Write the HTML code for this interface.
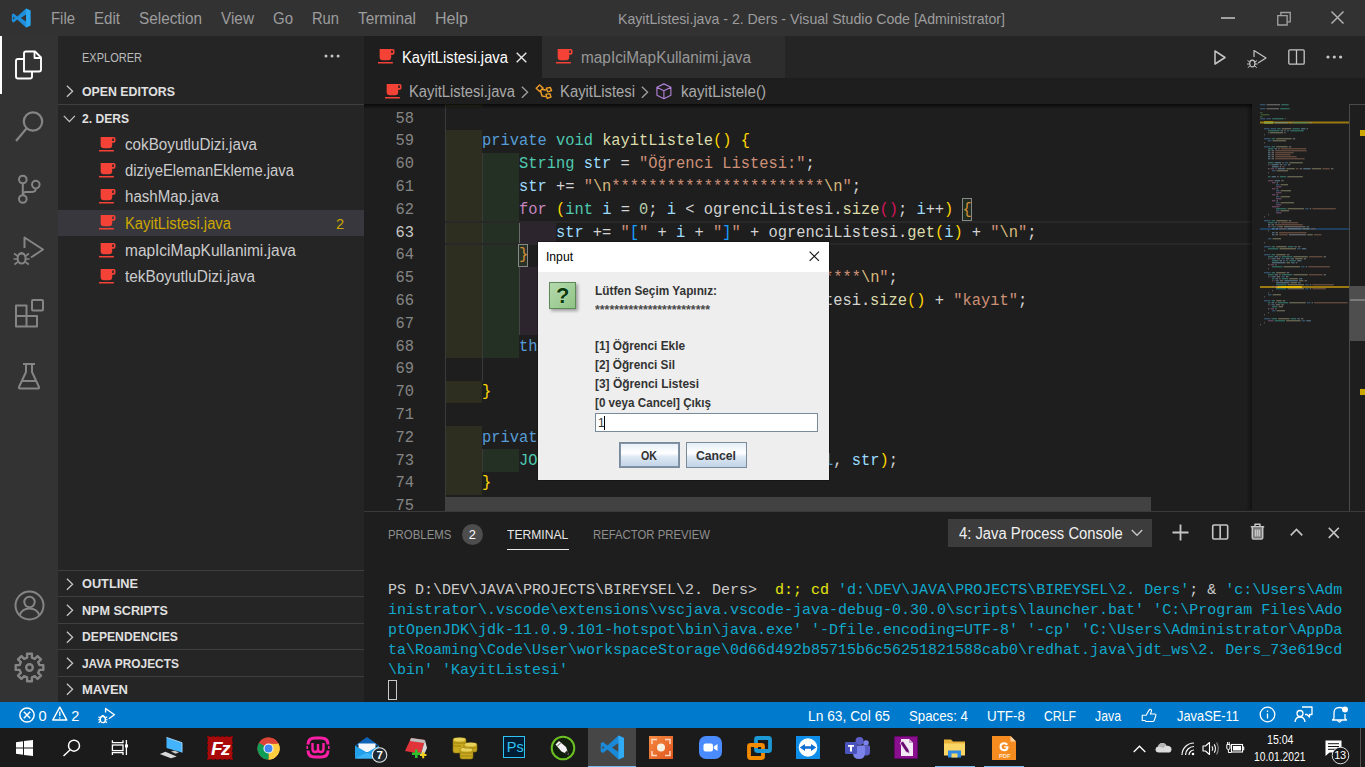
<!DOCTYPE html>
<html lang="tr"><head><meta charset="utf-8"><title>KayitListesi.java - 2. Ders - Visual Studio Code</title>
<style>
*{box-sizing:border-box;margin:0;padding:0}
html,body{width:1365px;height:767px;overflow:hidden;background:#1e1e1e}
body{position:relative;font-family:"Liberation Sans",sans-serif;font-size:14.5px;color:#ccc}
.t{position:absolute;white-space:pre;display:block;transform-origin:0 50%}
.a{position:absolute}
svg{position:absolute;overflow:visible}
.code{position:absolute;left:445px;white-space:pre;font-family:"Liberation Mono",monospace;font-size:16px;line-height:23px;height:23px;color:#d4d4d4;transform:scaleX(0.9625);transform-origin:0 50%}
.ln{position:absolute;left:364px;width:50px;text-align:right;font-family:"Liberation Mono",monospace;font-size:16px;line-height:23px;height:23px;color:#858585;transform:scaleX(0.9625);transform-origin:100% 50%}
.term{position:absolute;left:388px;white-space:pre;font-family:"Liberation Mono",monospace;font-size:15px;line-height:20px;height:20px;color:#11a8cd}
.kw{color:#569cd6}.ty{color:#4ec9b0}.fn{color:#dcdcaa}.va{color:#9cdcfe}.st{color:#ce9178}.es{color:#d7ba7d}.ct{color:#c586c0}.nu{color:#b5cea8}
.b1{color:#ffd700}.b2{color:#d4145a}.b3{color:#179fff}
.bo{color:#d39034}
.tw{color:#cccccc}.tyl{color:#e5e510}

</style></head>
<body>
<div class="a" style="left:0;top:0;width:1365px;height:36px;background:#323233"></div>
<svg style="left:11px;top:8px" width="20.5" height="20" viewBox="0 0 100 100"><path d="M74 2 L96 12 V88 L74 98 L30 58 L12 72 L3 67 V33 L12 28 L30 42 Z M74 32 L48 50 L74 68 Z M10 43 V57 L18 50 Z" fill="#1f8fdc" fill-rule="evenodd"/><path d="M74 2 L96 12 V88 L74 98 Z" fill="#2ba6f0"/></svg>
<span class="t" style="left:51px;top:8px;font-size:15.6px;line-height:22px;color:#9d9d9d;transform:scaleX(0.9547);">File</span>
<span class="t" style="left:94px;top:8px;font-size:15.6px;line-height:22px;color:#9d9d9d;transform:scaleX(0.9672);">Edit</span>
<span class="t" style="left:139px;top:8px;font-size:15.6px;line-height:22px;color:#9d9d9d;transform:scaleX(0.9817);">Selection</span>
<span class="t" style="left:221px;top:8px;font-size:15.6px;line-height:22px;color:#9d9d9d;transform:scaleX(0.9841);">View</span>
<span class="t" style="left:273px;top:8px;font-size:15.6px;line-height:22px;color:#9d9d9d;transform:scaleX(0.9611);">Go</span>
<span class="t" style="left:312px;top:8px;font-size:15.6px;line-height:22px;color:#9d9d9d;transform:scaleX(0.9434);">Run</span>
<span class="t" style="left:358px;top:8px;font-size:15.6px;line-height:22px;color:#9d9d9d;transform:scaleX(0.9838);">Terminal</span>
<span class="t" style="left:435px;top:8px;font-size:15.6px;line-height:22px;color:#9d9d9d;transform:scaleX(1.0285);">Help</span>
<span class="t" style="left:618px;top:8.5px;font-size:14.5px;line-height:20px;color:#9d9d9d;transform:scaleX(0.9747);">KayitListesi.java - 2. Ders - Visual Studio Code [Administrator]</span>
<div class="a" style="left:1221px;top:17px;width:14px;height:1.5px;background:#a0a0a0"></div>
<svg style="left:1276.5px;top:11.5px" width="14" height="13.5" viewBox="0 0 13 13" fill="none" stroke="#a0a0a0" stroke-width="1.3"><path d="M0.5 3.5h9v9h-9z M3.5 3.5v-3h9v9h-3"/></svg>
<svg style="left:1331.3px;top:11px" width="13" height="13" viewBox="0 0 13 13" fill="none" stroke="#b0b0b0" stroke-width="1.5"><path d="M0.5 0.5l12 12M12.5 0.5l-12 12"/></svg>
<div class="a" style="left:0;top:36px;width:58px;height:666px;background:#333333"></div>
<div class="a" style="left:0;top:36px;width:2px;height:58px;background:#fff"></div>
<svg style="left:14.4px;top:49.6px" width="29" height="30" viewBox="0 0 29 30" fill="none" stroke="#fff" stroke-width="1.9" stroke-linejoin="round"><path d="M10 21.5 V3.5 Q10 1.5 12 1.5 H21 L27 7.5 V19.5 Q27 21.5 25 21.5 Z"/><path d="M20.5 1.5 V8 H27" stroke-width="1.8"/><path d="M10 9 H4 Q2 9 2 11 V26.5 Q2 28.5 4 28.5 H16 Q18 28.5 18 26.5 V21.5"/></svg>
<svg style="left:14px;top:108px" width="32" height="36" viewBox="0 0 32 36" fill="none" stroke="#858585" stroke-width="2.2"><circle cx="19" cy="13.5" r="9.2"/><path d="M12.5 20.5 L2 33"/></svg>
<svg style="left:16px;top:172px" width="28" height="34" viewBox="0 0 28 34" fill="none" stroke="#858585" stroke-width="2"><circle cx="6.8" cy="7.5" r="3.8"/><circle cx="19.8" cy="12.6" r="3.8"/><circle cx="6.8" cy="27" r="3.8"/><path d="M6.8 11.3 V23.2 M19.8 16.4 Q19.8 20 15 20 H10 Q6.8 20 6.8 23"/></svg>
<svg style="left:12px;top:234px" width="34" height="34" viewBox="0 0 34 34" fill="none" stroke="#858585" stroke-width="2" stroke-linejoin="round"><path d="M12.5 14 V3.5 L31 15.5 L19 23.5"/><ellipse cx="9.6" cy="24.5" rx="4" ry="5"/><path d="M5.6 22 L2 19.5 M5.6 25 H1.5 M5.8 28 L2.5 30.5 M13.6 22 L17 19.5 M13.6 25 H17.6 M13.4 28 L16.8 30.5 M6.5 20.5 Q9.6 17 12.7 20.5" stroke-width="1.6"/></svg>
<svg style="left:14px;top:298px" width="32" height="32" viewBox="0 0 32 32" fill="none" stroke="#858585" stroke-width="2" stroke-linejoin="round"><path d="M2 7.5 H12.5 V18 H23 V28.5 H2 Z M2 18 H12.5 V28.5"/><rect x="18" y="2" width="11" height="10.5" rx="1"/></svg>
<svg style="left:17px;top:362px" width="24" height="28" viewBox="0 0 24 28" fill="none" stroke="#858585" stroke-width="2" stroke-linejoin="round"><path d="M6 2 H18 M9 2 V10 L2 25 Q1.6 26.5 3 26.5 H21 Q22.4 26.5 22 25 L15 10 V2 M5.5 19 H18.5"/></svg>
<svg style="left:13.5px;top:589.8px" width="31" height="31" viewBox="0 0 31 31" fill="none" stroke="#858585" stroke-width="2"><circle cx="15.5" cy="15.5" r="14"/><circle cx="15.5" cy="12" r="5.2"/><path d="M5.5 25.5 Q8 18.5 15.5 18.5 Q23 18.5 25.5 25.5"/></svg>
<svg style="left:13.5px;top:652px" width="31" height="31" viewBox="0 0 31 31" fill="none" stroke="#858585" stroke-width="2.4" stroke-linejoin="round"><path d="M29.29 13.09 L29.29 17.91 L25.42 17.88 L24.20 20.83 L26.95 23.55 L23.55 26.95 L20.83 24.20 L17.88 25.42 L17.91 29.29 L13.09 29.29 L13.12 25.42 L10.17 24.20 L7.45 26.95 L4.05 23.55 L6.80 20.83 L5.58 17.88 L1.71 17.91 L1.71 13.09 L5.58 13.12 L6.80 10.17 L4.05 7.45 L7.45 4.05 L10.17 6.80 L13.12 5.58 L13.09 1.71 L17.91 1.71 L17.88 5.58 L20.83 6.80 L23.55 4.05 L26.95 7.45 L24.20 10.17 L25.42 13.12 Z"/><circle cx="15.5" cy="15.5" r="3.3"/></svg>
<div class="a" style="left:58px;top:36px;width:306px;height:666px;background:#252526"></div>
<span class="t" style="left:82px;top:48.2px;font-size:13.3px;line-height:19px;color:#bbbbbb;transform:scaleX(0.8283);">EXPLORER</span>
<svg style="left:324.4px;top:54.4px" width="18" height="4" fill="#c5c5c5"><circle cx="2" cy="2" r="1.5"/><circle cx="8" cy="2" r="1.5"/><circle cx="14.1" cy="2" r="1.5"/></svg>
<svg style="left:66px;top:85.2px" width="8" height="12.6" viewBox="0 0 8 12.6" fill="none" stroke="#c5c5c5" stroke-width="1.3"><path d="M0.9 0.8 L6.6 6.3 L0.9 11.8"/></svg>
<span class="t" style="left:82px;top:81.5px;font-size:13.7px;line-height:19px;color:#e0e0e0;transform:scaleX(0.9005);font-weight:700;">OPEN EDITORS</span>
<div class="a" style="left:58px;top:104px;width:306px;height:1px;background:#3f3f40"></div>
<svg style="left:63.2px;top:115.2px" width="12.8" height="8" viewBox="0 0 12.8 8" fill="none" stroke="#c5c5c5" stroke-width="1.3"><path d="M0.8 0.9 L6.4 6.6 L11.9 0.9"/></svg>
<span class="t" style="left:82px;top:108.5px;font-size:13.7px;line-height:19px;color:#e0e0e0;transform:scaleX(0.8819);font-weight:700;">2. DERS</span>
<svg style="left:99.4px;top:136.5px" width="16.5" height="14.6" viewBox="2 3 20 18" preserveAspectRatio="none"><path d="M2,21H20V19H2M20,8H18V5H20M20,3H4V13A4,4 0 0,0 8,17H14A4,4 0 0,0 18,13V10H20A2,2 0 0,0 22,8V5C22,3.89 21.1,3 20,3Z" fill="#f44336"/></svg>
<span class="t" style="left:125px;top:133.6px;font-size:15.8px;line-height:22px;color:#cccccc;transform:scaleX(0.9635);">cokBoyutluDizi.java</span>
<svg style="left:99.4px;top:162.6px" width="16.5" height="14.6" viewBox="2 3 20 18" preserveAspectRatio="none"><path d="M2,21H20V19H2M20,8H18V5H20M20,3H4V13A4,4 0 0,0 8,17H14A4,4 0 0,0 18,13V10H20A2,2 0 0,0 22,8V5C22,3.89 21.1,3 20,3Z" fill="#f44336"/></svg>
<span class="t" style="left:125px;top:159.7px;font-size:15.8px;line-height:22px;color:#cccccc;transform:scaleX(0.9387);">diziyeElemanEkleme.java</span>
<svg style="left:99.4px;top:189.3px" width="16.5" height="14.6" viewBox="2 3 20 18" preserveAspectRatio="none"><path d="M2,21H20V19H2M20,8H18V5H20M20,3H4V13A4,4 0 0,0 8,17H14A4,4 0 0,0 18,13V10H20A2,2 0 0,0 22,8V5C22,3.89 21.1,3 20,3Z" fill="#f44336"/></svg>
<span class="t" style="left:125px;top:186.4px;font-size:15.8px;line-height:22px;color:#cccccc;transform:scaleX(0.9555);">hashMap.java</span>
<div class="a" style="left:58px;top:210px;width:306px;height:26px;background:#37373d"></div>
<span class="t" style="left:336px;top:213.5px;font-size:14.6px;line-height:20px;color:#cca700;">2</span>
<svg style="left:99.4px;top:215.4px" width="16.5" height="14.6" viewBox="2 3 20 18" preserveAspectRatio="none"><path d="M2,21H20V19H2M20,8H18V5H20M20,3H4V13A4,4 0 0,0 8,17H14A4,4 0 0,0 18,13V10H20A2,2 0 0,0 22,8V5C22,3.89 21.1,3 20,3Z" fill="#f44336"/></svg>
<span class="t" style="left:125px;top:212.5px;font-size:15.8px;line-height:22px;color:#cca700;transform:scaleX(0.9357);">KayitListesi.java</span>
<svg style="left:99.4px;top:242.5px" width="16.5" height="14.6" viewBox="2 3 20 18" preserveAspectRatio="none"><path d="M2,21H20V19H2M20,8H18V5H20M20,3H4V13A4,4 0 0,0 8,17H14A4,4 0 0,0 18,13V10H20A2,2 0 0,0 22,8V5C22,3.89 21.1,3 20,3Z" fill="#f44336"/></svg>
<span class="t" style="left:125px;top:239.6px;font-size:15.8px;line-height:22px;color:#cccccc;transform:scaleX(0.9785);">mapIciMapKullanimi.java</span>
<svg style="left:99.4px;top:268.9px" width="16.5" height="14.6" viewBox="2 3 20 18" preserveAspectRatio="none"><path d="M2,21H20V19H2M20,8H18V5H20M20,3H4V13A4,4 0 0,0 8,17H14A4,4 0 0,0 18,13V10H20A2,2 0 0,0 22,8V5C22,3.89 21.1,3 20,3Z" fill="#f44336"/></svg>
<span class="t" style="left:125px;top:266px;font-size:15.8px;line-height:22px;color:#cccccc;transform:scaleX(0.9739);">tekBoyutluDizi.java</span>
<div class="a" style="left:58px;top:570px;width:306px;height:1px;background:#3f3f40"></div>
<svg style="left:66px;top:577.7px" width="8" height="12.6" viewBox="0 0 8 12.6" fill="none" stroke="#c5c5c5" stroke-width="1.3"><path d="M0.9 0.8 L6.6 6.3 L0.9 11.8"/></svg>
<span class="t" style="left:82px;top:574.3px;font-size:13.7px;line-height:19px;color:#e0e0e0;transform:scaleX(0.9314);font-weight:700;">OUTLINE</span>
<div class="a" style="left:58px;top:596px;width:306px;height:1px;background:#3f3f40"></div>
<svg style="left:66px;top:604.1px" width="8" height="12.6" viewBox="0 0 8 12.6" fill="none" stroke="#c5c5c5" stroke-width="1.3"><path d="M0.9 0.8 L6.6 6.3 L0.9 11.8"/></svg>
<span class="t" style="left:82px;top:600.7px;font-size:13.7px;line-height:19px;color:#e0e0e0;transform:scaleX(0.9185);font-weight:700;">NPM SCRIPTS</span>
<div class="a" style="left:58px;top:623px;width:306px;height:1px;background:#3f3f40"></div>
<svg style="left:66px;top:630.5px" width="8" height="12.6" viewBox="0 0 8 12.6" fill="none" stroke="#c5c5c5" stroke-width="1.3"><path d="M0.9 0.8 L6.6 6.3 L0.9 11.8"/></svg>
<span class="t" style="left:82px;top:627.1px;font-size:13.7px;line-height:19px;color:#e0e0e0;transform:scaleX(0.8880);font-weight:700;">DEPENDENCIES</span>
<div class="a" style="left:58px;top:649px;width:306px;height:1px;background:#3f3f40"></div>
<svg style="left:66px;top:656.9px" width="8" height="12.6" viewBox="0 0 8 12.6" fill="none" stroke="#c5c5c5" stroke-width="1.3"><path d="M0.9 0.8 L6.6 6.3 L0.9 11.8"/></svg>
<span class="t" style="left:82px;top:653.5px;font-size:13.7px;line-height:19px;color:#e0e0e0;transform:scaleX(0.8687);font-weight:700;">JAVA PROJECTS</span>
<div class="a" style="left:58px;top:676px;width:306px;height:1px;background:#3f3f40"></div>
<svg style="left:66px;top:683.3px" width="8" height="12.6" viewBox="0 0 8 12.6" fill="none" stroke="#c5c5c5" stroke-width="1.3"><path d="M0.9 0.8 L6.6 6.3 L0.9 11.8"/></svg>
<span class="t" style="left:82px;top:679.9px;font-size:13.7px;line-height:19px;color:#e0e0e0;transform:scaleX(0.9492);font-weight:700;">MAVEN</span>
<div class="a" style="left:364px;top:36px;width:1001px;height:42px;background:#252526"></div>
<div class="a" style="left:364px;top:36px;width:178px;height:42px;background:#1e1e1e"></div>
<div class="a" style="left:542px;top:36px;width:243px;height:42px;background:#2d2d2d"></div>
<svg style="left:377.8px;top:49.1px" width="16.5" height="14.6" viewBox="2 3 20 18" preserveAspectRatio="none"><path d="M2,21H20V19H2M20,8H18V5H20M20,3H4V13A4,4 0 0,0 8,17H14A4,4 0 0,0 18,13V10H20A2,2 0 0,0 22,8V5C22,3.89 21.1,3 20,3Z" fill="#f44336"/></svg>
<span class="t" style="left:402px;top:46.5px;font-size:15.8px;line-height:22px;color:#ffffff;transform:scaleX(0.9357);">KayitListesi.java</span>
<svg style="left:516px;top:52px" width="11" height="11" viewBox="0 0 11 11" fill="none" stroke="#e8e8e8" stroke-width="1.4"><path d="M0.7 0.7 L10.3 10.3 M10.3 0.7 L0.7 10.3"/></svg>
<svg style="left:555.8px;top:49.1px" width="16.5" height="14.6" viewBox="2 3 20 18" preserveAspectRatio="none"><path d="M2,21H20V19H2M20,8H18V5H20M20,3H4V13A4,4 0 0,0 8,17H14A4,4 0 0,0 18,13V10H20A2,2 0 0,0 22,8V5C22,3.89 21.1,3 20,3Z" fill="#f44336"/></svg>
<span class="t" style="left:581px;top:46.5px;font-size:15.8px;line-height:22px;color:#989898;transform:scaleX(0.9728);">mapIciMapKullanimi.java</span>
<svg style="left:1213.8px;top:50.4px" width="12" height="15" viewBox="0 0 12 15" fill="none" stroke="#c5c5c5" stroke-width="1.5" stroke-linejoin="round"><path d="M1 1 L11 7.5 L1 14 Z"/></svg>
<svg style="left:1246px;top:49px" width="22" height="20" viewBox="0 0 22 20" fill="none" stroke="#c5c5c5" stroke-width="1.2" stroke-linejoin="round"><path d="M8 8 V1.5 L20 9 L12 14"/><ellipse cx="6.3" cy="14.5" rx="2.6" ry="3.3"/><path d="M3.7 13 L1.5 11.5 M3.7 15 H1 M3.9 17 L1.8 18.6 M8.9 13 L11.1 11.5 M8.9 15 H11.6 M8.7 17 L10.8 18.6" stroke-width="1"/></svg>
<svg style="left:1288px;top:49px" width="17" height="16" viewBox="0 0 17 16" fill="none" stroke="#c5c5c5" stroke-width="1.3"><rect x="0.8" y="0.8" width="15.4" height="14.4" rx="1.2"/><path d="M8.5 1 V15"/></svg>
<svg style="left:1326px;top:55.4px" width="18" height="4" fill="#c5c5c5"><circle cx="2" cy="2" r="1.6"/><circle cx="8.3" cy="2" r="1.6"/><circle cx="14.6" cy="2" r="1.6"/></svg>
<div class="a" style="left:364px;top:78px;width:1001px;height:26px;background:#1e1e1e"></div>
<svg style="left:384.5px;top:83.5px" width="16.5" height="14.6" viewBox="2 3 20 18" preserveAspectRatio="none"><path d="M2,21H20V19H2M20,8H18V5H20M20,3H4V13A4,4 0 0,0 8,17H14A4,4 0 0,0 18,13V10H20A2,2 0 0,0 22,8V5C22,3.89 21.1,3 20,3Z" fill="#f44336"/></svg>
<span class="t" style="left:409px;top:80.5px;font-size:15.8px;line-height:22px;color:#a9a9a9;transform:scaleX(0.9357);">KayitListesi.java</span>
<svg style="left:520.8px;top:85.7px" width="8" height="12.6" viewBox="0 0 8 12.6" fill="none" stroke="#a0a0a0" stroke-width="1.3"><path d="M0.9 0.8 L6.6 6.3 L0.9 11.8"/></svg>
<svg style="left:535px;top:84px" width="18" height="16" viewBox="0 0 18 16" fill="none" stroke="#ee9d28" stroke-width="1.4" stroke-linejoin="round"><path d="M1.2 4.2 L4.6 0.9 L8 4 L4.7 7.4 Z M7.2 5.2 L11 6.2 M5.6 7 L7 12 L10.8 12.6 M11.4 4.2 L15.2 3.4 L16.6 6.6 L12.6 7.8 Z M11 10.4 L14.8 9.6 L16 13 L12.2 14.4 Z"/></svg>
<span class="t" style="left:560px;top:80.5px;font-size:15.8px;line-height:22px;color:#a9a9a9;transform:scaleX(0.9385);">KayitListesi</span>
<svg style="left:641.4px;top:85.7px" width="8" height="12.6" viewBox="0 0 8 12.6" fill="none" stroke="#a0a0a0" stroke-width="1.3"><path d="M0.9 0.8 L6.6 6.3 L0.9 11.8"/></svg>
<svg style="left:656.4px;top:83px" width="15.8" height="16.6" viewBox="0 0 18 19" fill="none" stroke="#b180d7" stroke-width="1.3" stroke-linejoin="round"><path d="M9 1 L17 5 V14 L9 18 L1 14 V5 Z M1 5 L9 9 L17 5 M9 9 V18"/></svg>
<span class="t" style="left:681px;top:80.5px;font-size:15.8px;line-height:22px;color:#a9a9a9;transform:scaleX(0.9584);">kayitListele()</span>
<div class="a" style="left:0;top:702px;width:1365px;height:26px;background:#007acc"></div>
<svg style="left:18.6px;top:706.6px" width="16" height="16" viewBox="0 0 16 16" fill="none" stroke="#fff" stroke-width="1.5"><circle cx="8" cy="8" r="7.1"/><path d="M4.8 4.8 L11.2 11.2 M11.2 4.8 L4.8 11.2"/></svg>
<span class="t" style="left:38.5px;top:705.6px;font-size:14.6px;line-height:20px;color:#ffffff;">0</span>
<svg style="left:51.6px;top:706.4px" width="15.6" height="15" viewBox="0 0 15.6 15" fill="none" stroke="#fff" stroke-width="1.5" stroke-linejoin="round"><path d="M7.8 1.2 L14.8 14 H0.8 Z"/><path d="M7.8 5.6 V10 M7.8 11.2 V12.6" stroke-width="1.3"/></svg>
<span class="t" style="left:71.3px;top:705.6px;font-size:14.6px;line-height:20px;color:#ffffff;">2</span>
<svg style="left:98px;top:707px" width="17" height="17" viewBox="0 0 17 17" fill="none" stroke="#fff" stroke-width="1.4" stroke-linejoin="round"><path d="M7.6 5.6 V1.5 L16.4 7.8 L10.8 11.8"/><ellipse cx="4.8" cy="12.4" rx="2.6" ry="3.2"/><path d="M2.2 11 L0.4 9.8 M2.2 12.7 H0.1 M2.4 14.3 L0.6 15.7 M7.4 11 L9.2 9.8 M7.4 12.7 H9.5 M7.2 14.3 L9 15.7 M3.3 9.7 Q4.8 7.6 6.3 9.7" stroke-width="1.1"/></svg>
<span class="t" style="left:808px;top:705.6px;font-size:14.6px;line-height:20px;color:#ffffff;transform:scaleX(0.9441);">Ln 63, Col 65</span>
<span class="t" style="left:909px;top:705.6px;font-size:14.6px;line-height:20px;color:#ffffff;transform:scaleX(0.9087);">Spaces: 4</span>
<span class="t" style="left:987px;top:705.6px;font-size:14.6px;line-height:20px;color:#ffffff;transform:scaleX(0.9187);">UTF-8</span>
<span class="t" style="left:1044px;top:705.6px;font-size:14.6px;line-height:20px;color:#ffffff;transform:scaleX(0.8393);">CRLF</span>
<span class="t" style="left:1095px;top:705.6px;font-size:14.6px;line-height:20px;color:#ffffff;transform:scaleX(0.8431);">Java</span>
<span class="t" style="left:1177px;top:705.6px;font-size:14.6px;line-height:20px;color:#ffffff;transform:scaleX(0.8815);">JavaSE-11</span>
<svg style="left:1141.3px;top:707.5px" width="16.2" height="14.6" viewBox="0 0 18 17" fill="none" stroke="#fff" stroke-width="1.3" stroke-linejoin="round"><path d="M1 8.5 H5.5 L9 2.5 Q9.8 1 11.2 1.8 Q12.3 2.6 11.6 4.2 L10.5 7 H15.5 Q17.3 7.2 16.8 9 L15 14.5 Q14.5 15.8 13 15.8 H5.5 L4 14.5 H1 Z"/></svg>
<svg style="left:1259px;top:706px" width="17" height="17" viewBox="0 0 17 17" fill="none" stroke="#fff" stroke-width="1.3"><circle cx="8.5" cy="8.5" r="7.3"/><path d="M8.5 7.5 V12.5 M8.5 4.5 V6"/></svg>
<svg style="left:1294px;top:706px" width="19" height="17" viewBox="0 0 19 17" fill="none" stroke="#fff" stroke-width="1.3" stroke-linejoin="round"><path d="M8 1 H18 V8.5 H15.5 V11 L13 8.5 H11"/><circle cx="6" cy="7.5" r="3"/><path d="M1 16 Q1.5 11 6 11 Q10.5 11 11 16"/></svg>
<svg style="left:1331px;top:705px" width="18" height="19" viewBox="0 0 18 19" fill="none" stroke="#fff" stroke-width="1.3" stroke-linejoin="round"><path d="M3 13.5 V8 Q3 2.5 8.5 2.5 Q11 2.5 12 3.5 M14 9 V13.5 L15.5 15 H1.5 L3 13.5 M6.5 15.5 Q8.5 18.5 10.5 15.5"/><circle cx="14" cy="4.5" r="3" fill="#fff" stroke="none"/></svg>
<div class="a" style="left:364px;top:104px;width:1001px;height:407px;background:#1e1e1e;overflow:hidden"></div>
<div class="a" style="left:445px;top:104px;width:37px;height:3px;background:#2d2d20"></div>
<div class="a" style="left:445px;top:130px;width:37px;height:23px;background:#2d2d20"></div>
<div class="a" style="left:445px;top:153px;width:37px;height:22px;background:#2d2d20"></div>
<div class="a" style="left:482px;top:153px;width:37px;height:22px;background:#233023"></div>
<div class="a" style="left:445px;top:175px;width:37px;height:23px;background:#2d2d20"></div>
<div class="a" style="left:482px;top:175px;width:37px;height:23px;background:#233023"></div>
<div class="a" style="left:445px;top:198px;width:37px;height:23px;background:#2d2d20"></div>
<div class="a" style="left:482px;top:198px;width:37px;height:23px;background:#233023"></div>
<div class="a" style="left:445px;top:221px;width:37px;height:23px;background:#2d2d20"></div>
<div class="a" style="left:482px;top:221px;width:37px;height:23px;background:#233023"></div>
<div class="a" style="left:519px;top:221px;width:37px;height:23px;background:#2d252d"></div>
<div class="a" style="left:445px;top:244px;width:37px;height:23px;background:#2d2d20"></div>
<div class="a" style="left:482px;top:244px;width:37px;height:23px;background:#233023"></div>
<div class="a" style="left:445px;top:267px;width:37px;height:22px;background:#2d2d20"></div>
<div class="a" style="left:482px;top:267px;width:37px;height:22px;background:#233023"></div>
<div class="a" style="left:519px;top:267px;width:37px;height:22px;background:#2d252d"></div>
<div class="a" style="left:445px;top:289px;width:37px;height:23px;background:#2d2d20"></div>
<div class="a" style="left:482px;top:289px;width:37px;height:23px;background:#233023"></div>
<div class="a" style="left:519px;top:289px;width:37px;height:23px;background:#2d252d"></div>
<div class="a" style="left:445px;top:312px;width:37px;height:23px;background:#2d2d20"></div>
<div class="a" style="left:482px;top:312px;width:37px;height:23px;background:#233023"></div>
<div class="a" style="left:519px;top:312px;width:37px;height:23px;background:#2d252d"></div>
<div class="a" style="left:445px;top:335px;width:37px;height:23px;background:#2d2d20"></div>
<div class="a" style="left:482px;top:335px;width:37px;height:23px;background:#233023"></div>
<div class="a" style="left:445px;top:381px;width:37px;height:22px;background:#2d2d20"></div>
<div class="a" style="left:445px;top:426px;width:37px;height:23px;background:#2d2d20"></div>
<div class="a" style="left:445px;top:449px;width:37px;height:23px;background:#2d2d20"></div>
<div class="a" style="left:482px;top:449px;width:37px;height:23px;background:#233023"></div>
<div class="a" style="left:445px;top:472px;width:37px;height:23px;background:#2d2d20"></div>
<div class="a" style="left:445px;top:104px;width:1px;height:407px;background:#3a3a3a"></div>
<div class="a" style="left:482px;top:153px;width:1px;height:228px;background:#3a3a3a"></div>
<div class="a" style="left:482px;top:449px;width:1px;height:23px;background:#3a3a3a"></div>
<div class="a" style="left:519px;top:221px;width:1px;height:23px;background:#6a6a6a"></div>
<div class="a" style="left:519px;top:267px;width:1px;height:68px;background:#454545"></div>
<div class="a" style="left:445px;top:221px;width:807px;height:24px;border-top:2px solid #282828;border-bottom:2px solid #282828"></div>
<div class="a" style="left:961.94px;top:198px;width:10px;height:23px;border:1px solid #888;background:#1f2b1f"></div>
<div class="a" style="left:518.42px;top:244px;width:10px;height:23px;border:1px solid #888;background:#2a3328"></div>
<div class="ln" style="top:107.5px">58</div>
<div class="ln" style="top:130.3px">59</div>
<div class="code" style="top:130.3px">    <span class="kw">private</span> <span class="ty">void</span> <span class="fn">kayitListele</span><span class="b1">()</span> <span class="b1">{</span></div>
<div class="ln" style="top:153.1px">60</div>
<div class="code" style="top:153.1px">        <span class="ty">String</span> <span class="va">str</span> = <span class="st">&quot;Öğrenci Listesi:&quot;</span>;</div>
<div class="ln" style="top:175.9px">61</div>
<div class="code" style="top:175.9px">        <span class="va">str</span> += <span class="st">&quot;</span><span class="es">\n</span><span class="st">***********************</span><span class="es">\n</span><span class="st">&quot;</span>;</div>
<div class="ln" style="top:198.7px">62</div>
<div class="code" style="top:198.7px">        <span class="ct">for</span> <span class="b1">(</span><span class="ty">int</span> <span class="va">i</span> = <span class="nu">0</span>; <span class="va">i</span> &lt; ogrenciListesi.<span class="fn">size</span><span class="b2">()</span>; <span class="va">i</span>++<span class="b1">)</span> <span class="bo">{</span></div>
<div class="ln" style="top:221.5px;color:#c6c6c6">63</div>
<div class="code" style="top:221.5px">            <span class="va">str</span> += <span class="st">&quot;</span><span class="b3">[</span><span class="st">&quot;</span> + <span class="va">i</span> + <span class="st">&quot;</span><span class="b3">]</span><span class="st">&quot;</span> + ogrenciListesi.<span class="fn">get</span><span class="b1">(</span><span class="va">i</span><span class="b1">)</span> + <span class="st">&quot;</span><span class="es">\n</span><span class="st">&quot;</span>;</div>
<div class="ln" style="top:244.3px">64</div>
<div class="code" style="top:244.3px">        <span class="bo">}</span></div>
<div class="ln" style="top:267.1px">65</div>
<div class="code" style="top:267.1px">            <span class="va">str</span> += <span class="st">&quot;</span><span class="es">\n</span><span class="st">***********************</span><span class="es">\n</span><span class="st">&quot;</span>;</div>
<div class="ln" style="top:289.9px">66</div>
<div class="code" style="top:289.9px">            <span class="va">str</span> += <span class="st">&quot;Toplam &quot;</span> + ogrenciListesi.<span class="fn">size</span><span class="b1">()</span> + <span class="st">&quot;kayıt&quot;</span>;</div>
<div class="ln" style="top:312.7px">67</div>
<div class="ln" style="top:335.5px">68</div>
<div class="code" style="top:335.5px">        <span class="kw">this</span>.<span class="fn">anaMenu</span><span class="b1">()</span>;</div>
<div class="ln" style="top:358.3px">69</div>
<div class="ln" style="top:381.1px">70</div>
<div class="code" style="top:381.1px">    <span class="b1">}</span></div>
<div class="ln" style="top:403.9px">71</div>
<div class="ln" style="top:426.7px">72</div>
<div class="code" style="top:426.7px">    <span class="kw">private</span> <span class="ty">void</span> <span class="fn">mesaj</span><span class="b1">(</span><span class="ty">String</span> <span class="va">str</span><span class="b1">)</span> <span class="b1">{</span></div>
<div class="ln" style="top:449.5px">73</div>
<div class="code" style="top:449.5px">        <span class="ty">JOptionPane</span>.<span class="fn">showMessageDialog</span><span class="b1">(</span><span class="kw">null</span>, <span class="va">str</span><span class="b1">)</span>;</div>
<div class="ln" style="top:472.3px">74</div>
<div class="code" style="top:472.3px">    <span class="b1">}</span></div>
<div class="ln" style="top:495.1px">75</div>
<div class="a" style="left:364px;top:104px;width:888px;height:5px;background:linear-gradient(#000000aa,#00000000)"></div>
<div class="a" style="left:445px;top:497px;width:706px;height:14px;background:#424242"></div>
<div class="a" style="left:1246px;top:104px;width:6px;height:406px;background:linear-gradient(90deg,#1e1e1e00,#00000066)"></div>
<div class="a" style="left:1252px;top:104px;width:97px;height:407px;background:#1e1e1e"></div>
<svg style="left:1252px;top:104px" width="97" height="406" ><rect x="8" y="17.5" width="89" height="2" fill="#9a7a10"/><rect x="12" y="17.5" width="9" height="2" fill="#e6b800"/><rect x="8" y="124" width="89" height="2" fill="#1f3f5f"/><rect x="8" y="182" width="89" height="2" fill="#9a7a10"/><rect x="24" y="182" width="26" height="2" fill="#e6b800"/><rect x="8.0" y="0" width="5.4" height="1.4" fill="#3f6f96" opacity="0.6"/><rect x="14.6" y="0" width="13.4" height="1.4" fill="#8a8a8a" opacity="0.6"/><rect x="29.2" y="0" width="7.4" height="1.4" fill="#3a8f80" opacity="0.6"/><rect x="8.0" y="4" width="5.4" height="1.4" fill="#3f6f96" opacity="0.6"/><rect x="14.6" y="4" width="12.4" height="1.4" fill="#8a8a8a" opacity="0.6"/><rect x="28.2" y="4" width="9.4" height="1.4" fill="#3a8f80" opacity="0.6"/><rect x="8.0" y="8" width="2.4" height="1.4" fill="#4f7a45" opacity="0.6"/><rect x="9.0" y="10" width="8.4" height="1.4" fill="#4f7a45" opacity="0.6"/><rect x="8.0" y="12" width="2.4" height="1.4" fill="#4f7a45" opacity="0.6"/><rect x="8.0" y="14" width="5.4" height="1.4" fill="#3f6f96" opacity="0.6"/><rect x="14.6" y="14" width="4.4" height="1.4" fill="#3f6f96" opacity="0.6"/><rect x="20.2" y="14" width="11.4" height="1.4" fill="#3a8f80" opacity="0.6"/><rect x="32.8" y="14" width="0.8" height="1.4" fill="#8a8a8a" opacity="0.6"/><rect x="12.0" y="18" width="9.4" height="1.4" fill="#3a8f80" opacity="0.6"/><rect x="22.6" y="18" width="13.4" height="1.4" fill="#6a93a8" opacity="0.6"/><rect x="37.2" y="18" width="2.4" height="1.4" fill="#8a8a8a" opacity="0.6"/><rect x="40.8" y="18" width="15.4" height="1.4" fill="#3a8f80" opacity="0.6"/><rect x="57.4" y="18" width="2.4" height="1.4" fill="#8a8a8a" opacity="0.6"/><rect x="12.0" y="24" width="5.4" height="1.4" fill="#3f6f96" opacity="0.6"/><rect x="18.6" y="24" width="5.4" height="1.4" fill="#3f6f96" opacity="0.6"/><rect x="25.2" y="24" width="3.4" height="1.4" fill="#3a8f80" opacity="0.6"/><rect x="29.8" y="24" width="9.4" height="1.4" fill="#8f8f70" opacity="0.6"/><rect x="40.4" y="24" width="7.4" height="1.4" fill="#3a8f80" opacity="0.6"/><rect x="49.0" y="24" width="4.4" height="1.4" fill="#6a93a8" opacity="0.6"/><rect x="54.6" y="24" width="1.4" height="1.4" fill="#8a8a8a" opacity="0.6"/><rect x="16.0" y="26" width="11.4" height="1.4" fill="#3a8f80" opacity="0.6"/><rect x="28.6" y="26" width="2.4" height="1.4" fill="#6a93a8" opacity="0.6"/><rect x="32.2" y="26" width="1.4" height="1.4" fill="#8a8a8a" opacity="0.6"/><rect x="34.8" y="26" width="2.4" height="1.4" fill="#3f6f96" opacity="0.6"/><rect x="38.4" y="26" width="13.4" height="1.4" fill="#3a8f80" opacity="0.6"/><rect x="16.0" y="28" width="0.8" height="1.4" fill="#6a93a8" opacity="0.6"/><rect x="17.6" y="28" width="13.4" height="1.4" fill="#8f8f70" opacity="0.6"/><rect x="32.2" y="28" width="1.4" height="1.4" fill="#8a8a8a" opacity="0.6"/><rect x="12.0" y="30" width="0.8" height="1.4" fill="#8a8a8a" opacity="0.6"/><rect x="12.0" y="34" width="6.4" height="1.4" fill="#3f6f96" opacity="0.6"/><rect x="19.6" y="34" width="3.4" height="1.4" fill="#3a8f80" opacity="0.6"/><rect x="24.2" y="34" width="15.4" height="1.4" fill="#8f8f70" opacity="0.6"/><rect x="40.8" y="34" width="2.4" height="1.4" fill="#8a8a8a" opacity="0.6"/><rect x="16.0" y="36" width="3.4" height="1.4" fill="#3f6f96" opacity="0.6"/><rect x="20.6" y="36" width="13.4" height="1.4" fill="#8f8f70" opacity="0.6"/><rect x="12.0" y="38" width="0.8" height="1.4" fill="#8a8a8a" opacity="0.6"/><rect x="12.0" y="42" width="6.4" height="1.4" fill="#3f6f96" opacity="0.6"/><rect x="19.6" y="42" width="3.4" height="1.4" fill="#3a8f80" opacity="0.6"/><rect x="24.2" y="42" width="11.4" height="1.4" fill="#8f8f70" opacity="0.6"/><rect x="36.8" y="42" width="2.4" height="1.4" fill="#8a8a8a" opacity="0.6"/><rect x="16.0" y="44" width="5.4" height="1.4" fill="#3a8f80" opacity="0.6"/><rect x="22.6" y="44" width="2.4" height="1.4" fill="#6a93a8" opacity="0.6"/><rect x="26.2" y="44" width="1.4" height="1.4" fill="#8a8a8a" opacity="0.6"/><rect x="28.8" y="44" width="25.4" height="1.4" fill="#8a6250" opacity="0.6"/><rect x="16.0" y="46" width="2.4" height="1.4" fill="#6a93a8" opacity="0.6"/><rect x="19.6" y="46" width="2.4" height="1.4" fill="#8a8a8a" opacity="0.6"/><rect x="23.2" y="46" width="31.4" height="1.4" fill="#8a6250" opacity="0.6"/><rect x="16.0" y="48" width="2.4" height="1.4" fill="#6a93a8" opacity="0.6"/><rect x="19.6" y="48" width="2.4" height="1.4" fill="#8a8a8a" opacity="0.6"/><rect x="23.2" y="48" width="18.4" height="1.4" fill="#8a6250" opacity="0.6"/><rect x="16.0" y="50" width="2.4" height="1.4" fill="#6a93a8" opacity="0.6"/><rect x="19.6" y="50" width="2.4" height="1.4" fill="#8a8a8a" opacity="0.6"/><rect x="23.2" y="50" width="15.4" height="1.4" fill="#8a6250" opacity="0.6"/><rect x="16.0" y="52" width="2.4" height="1.4" fill="#6a93a8" opacity="0.6"/><rect x="19.6" y="52" width="2.4" height="1.4" fill="#8a8a8a" opacity="0.6"/><rect x="23.2" y="52" width="21.4" height="1.4" fill="#8a6250" opacity="0.6"/><rect x="16.0" y="54" width="2.4" height="1.4" fill="#6a93a8" opacity="0.6"/><rect x="19.6" y="54" width="2.4" height="1.4" fill="#8a8a8a" opacity="0.6"/><rect x="23.2" y="54" width="29.4" height="1.4" fill="#8a6250" opacity="0.6"/><rect x="16.0" y="58" width="5.4" height="1.4" fill="#3a8f80" opacity="0.6"/><rect x="22.6" y="58" width="6.4" height="1.4" fill="#6a93a8" opacity="0.6"/><rect x="30.2" y="58" width="1.4" height="1.4" fill="#8a8a8a" opacity="0.6"/><rect x="32.8" y="58" width="3.4" height="1.4" fill="#3f6f96" opacity="0.6"/><rect x="37.4" y="58" width="13.4" height="1.4" fill="#8f8f70" opacity="0.6"/><rect x="16.0" y="60" width="1.4" height="1.4" fill="#8a5a86" opacity="0.6"/><rect x="18.6" y="60" width="0.8" height="1.4" fill="#8a8a8a" opacity="0.6"/><rect x="20.2" y="60" width="6.4" height="1.4" fill="#6a93a8" opacity="0.6"/><rect x="27.8" y="60" width="2.4" height="1.4" fill="#8a8a8a" opacity="0.6"/><rect x="31.4" y="60" width="3.4" height="1.4" fill="#3f6f96" opacity="0.6"/><rect x="36.0" y="60" width="2.4" height="1.4" fill="#8a8a8a" opacity="0.6"/><rect x="20.0" y="62" width="6.4" height="1.4" fill="#6a93a8" opacity="0.6"/><rect x="27.6" y="62" width="1.4" height="1.4" fill="#8a8a8a" opacity="0.6"/><rect x="30.2" y="62" width="2.4" height="1.4" fill="#8a6250" opacity="0.6"/><rect x="16.0" y="64" width="1.4" height="1.4" fill="#8a8a8a" opacity="0.6"/><rect x="18.6" y="64" width="3.4" height="1.4" fill="#8a5a86" opacity="0.6"/><rect x="23.2" y="64" width="1.4" height="1.4" fill="#8a5a86" opacity="0.6"/><rect x="25.8" y="64" width="7.4" height="1.4" fill="#6a93a8" opacity="0.6"/><rect x="34.4" y="64" width="8.4" height="1.4" fill="#8f8f70" opacity="0.6"/><rect x="44.0" y="64" width="2.4" height="1.4" fill="#8a6250" opacity="0.6"/><rect x="47.6" y="64" width="2.4" height="1.4" fill="#8a8a8a" opacity="0.6"/><rect x="51.2" y="64" width="7.4" height="1.4" fill="#6a93a8" opacity="0.6"/><rect x="59.8" y="64" width="9.4" height="1.4" fill="#8f8f70" opacity="0.6"/><rect x="70.4" y="64" width="7.4" height="1.4" fill="#8a6250" opacity="0.6"/><rect x="79.0" y="64" width="2.4" height="1.4" fill="#8a8a8a" opacity="0.6"/><rect x="20.0" y="66" width="3.4" height="1.4" fill="#3f6f96" opacity="0.6"/><rect x="24.6" y="66" width="11.4" height="1.4" fill="#8f8f70" opacity="0.6"/><rect x="16.0" y="68" width="0.8" height="1.4" fill="#8a8a8a" opacity="0.6"/><rect x="16.0" y="72" width="2.4" height="1.4" fill="#3a8f80" opacity="0.6"/><rect x="19.6" y="72" width="4.4" height="1.4" fill="#6a93a8" opacity="0.6"/><rect x="25.2" y="72" width="1.4" height="1.4" fill="#8a8a8a" opacity="0.6"/><rect x="27.8" y="72" width="6.4" height="1.4" fill="#3a8f80" opacity="0.6"/><rect x="35.4" y="72" width="15.4" height="1.4" fill="#8f8f70" opacity="0.6"/><rect x="16.0" y="76" width="5.4" height="1.4" fill="#8a5a86" opacity="0.6"/><rect x="22.6" y="76" width="5.4" height="1.4" fill="#6a93a8" opacity="0.6"/><rect x="29.2" y="76" width="2.4" height="1.4" fill="#8a8a8a" opacity="0.6"/><rect x="20.0" y="78" width="3.4" height="1.4" fill="#8a5a86" opacity="0.6"/><rect x="24.6" y="78" width="1.4" height="1.4" fill="#8a8a8a" opacity="0.6"/><rect x="24.0" y="80" width="3.4" height="1.4" fill="#3f6f96" opacity="0.6"/><rect x="28.6" y="80" width="7.4" height="1.4" fill="#8f8f70" opacity="0.6"/><rect x="24.0" y="82" width="5.4" height="1.4" fill="#8a5a86" opacity="0.6"/><rect x="20.0" y="84" width="3.4" height="1.4" fill="#8a5a86" opacity="0.6"/><rect x="24.6" y="84" width="1.4" height="1.4" fill="#8a8a8a" opacity="0.6"/><rect x="24.0" y="86" width="3.4" height="1.4" fill="#3f6f96" opacity="0.6"/><rect x="28.6" y="86" width="10.4" height="1.4" fill="#8f8f70" opacity="0.6"/><rect x="24.0" y="88" width="5.4" height="1.4" fill="#8a5a86" opacity="0.6"/><rect x="20.0" y="90" width="3.4" height="1.4" fill="#8a5a86" opacity="0.6"/><rect x="24.6" y="90" width="1.4" height="1.4" fill="#8a8a8a" opacity="0.6"/><rect x="24.0" y="92" width="3.4" height="1.4" fill="#3f6f96" opacity="0.6"/><rect x="28.6" y="92" width="9.4" height="1.4" fill="#8f8f70" opacity="0.6"/><rect x="24.0" y="94" width="5.4" height="1.4" fill="#8a5a86" opacity="0.6"/><rect x="20.0" y="96" width="3.4" height="1.4" fill="#8a5a86" opacity="0.6"/><rect x="24.6" y="96" width="1.4" height="1.4" fill="#8a8a8a" opacity="0.6"/><rect x="24.0" y="98" width="3.4" height="1.4" fill="#3f6f96" opacity="0.6"/><rect x="28.6" y="98" width="13.4" height="1.4" fill="#8f8f70" opacity="0.6"/><rect x="24.0" y="100" width="5.4" height="1.4" fill="#8a5a86" opacity="0.6"/><rect x="20.0" y="102" width="7.4" height="1.4" fill="#8a5a86" opacity="0.6"/><rect x="24.0" y="104" width="10.4" height="1.4" fill="#3a8f80" opacity="0.6"/><rect x="35.6" y="104" width="16.4" height="1.4" fill="#8f8f70" opacity="0.6"/><rect x="53.2" y="104" width="3.4" height="1.4" fill="#3f6f96" opacity="0.6"/><rect x="57.8" y="104" width="1.4" height="1.4" fill="#8a8a8a" opacity="0.6"/><rect x="60.4" y="104" width="23.4" height="1.4" fill="#8a6250" opacity="0.6"/><rect x="24.0" y="106" width="3.4" height="1.4" fill="#3f6f96" opacity="0.6"/><rect x="28.6" y="106" width="8.4" height="1.4" fill="#8f8f70" opacity="0.6"/><rect x="24.0" y="108" width="5.4" height="1.4" fill="#8a5a86" opacity="0.6"/><rect x="16.0" y="110" width="0.8" height="1.4" fill="#8a8a8a" opacity="0.6"/><rect x="12.0" y="112" width="0.8" height="1.4" fill="#8a8a8a" opacity="0.6"/><rect x="12.0" y="116" width="6.4" height="1.4" fill="#3f6f96" opacity="0.6"/><rect x="19.6" y="116" width="3.4" height="1.4" fill="#3a8f80" opacity="0.6"/><rect x="24.2" y="116" width="11.4" height="1.4" fill="#8f8f70" opacity="0.6"/><rect x="36.8" y="116" width="2.4" height="1.4" fill="#8a8a8a" opacity="0.6"/><rect x="16.0" y="118" width="5.4" height="1.4" fill="#3a8f80" opacity="0.6"/><rect x="22.6" y="118" width="2.4" height="1.4" fill="#6a93a8" opacity="0.6"/><rect x="26.2" y="118" width="1.4" height="1.4" fill="#8a8a8a" opacity="0.6"/><rect x="28.8" y="118" width="17.4" height="1.4" fill="#8a6250" opacity="0.6"/><rect x="16.0" y="120" width="2.4" height="1.4" fill="#6a93a8" opacity="0.6"/><rect x="19.6" y="120" width="2.4" height="1.4" fill="#8a8a8a" opacity="0.6"/><rect x="23.2" y="120" width="27.4" height="1.4" fill="#8a6250" opacity="0.6"/><rect x="16.0" y="122" width="2.4" height="1.4" fill="#8a5a86" opacity="0.6"/><rect x="19.6" y="122" width="0.8" height="1.4" fill="#8a8a8a" opacity="0.6"/><rect x="21.2" y="122" width="2.4" height="1.4" fill="#3a8f80" opacity="0.6"/><rect x="24.8" y="122" width="0.8" height="1.4" fill="#6a93a8" opacity="0.6"/><rect x="26.4" y="122" width="4.4" height="1.4" fill="#8a8a8a" opacity="0.6"/><rect x="32.0" y="122" width="21.4" height="1.4" fill="#8a8a8a" opacity="0.6"/><rect x="54.6" y="122" width="2.4" height="1.4" fill="#6a93a8" opacity="0.6"/><rect x="20.0" y="124" width="2.4" height="1.4" fill="#6a93a8" opacity="0.6"/><rect x="23.6" y="124" width="2.4" height="1.4" fill="#8a8a8a" opacity="0.6"/><rect x="27.2" y="124" width="7.4" height="1.4" fill="#8a6250" opacity="0.6"/><rect x="35.8" y="124" width="13.4" height="1.4" fill="#8a8a8a" opacity="0.6"/><rect x="50.4" y="124" width="7.4" height="1.4" fill="#8f8f70" opacity="0.6"/><rect x="59.0" y="124" width="4.4" height="1.4" fill="#8a6250" opacity="0.6"/><rect x="16.0" y="126" width="0.8" height="1.4" fill="#8a8a8a" opacity="0.6"/><rect x="20.0" y="128" width="2.4" height="1.4" fill="#6a93a8" opacity="0.6"/><rect x="23.6" y="128" width="2.4" height="1.4" fill="#8a8a8a" opacity="0.6"/><rect x="27.2" y="128" width="27.4" height="1.4" fill="#8a6250" opacity="0.6"/><rect x="20.0" y="130" width="2.4" height="1.4" fill="#6a93a8" opacity="0.6"/><rect x="23.6" y="130" width="2.4" height="1.4" fill="#8a8a8a" opacity="0.6"/><rect x="27.2" y="130" width="8.4" height="1.4" fill="#8a6250" opacity="0.6"/><rect x="36.8" y="130" width="17.4" height="1.4" fill="#8a8a8a" opacity="0.6"/><rect x="55.4" y="130" width="5.4" height="1.4" fill="#8f8f70" opacity="0.6"/><rect x="62.0" y="130" width="7.4" height="1.4" fill="#8a6250" opacity="0.6"/><rect x="16.0" y="134" width="3.4" height="1.4" fill="#3f6f96" opacity="0.6"/><rect x="20.6" y="134" width="8.4" height="1.4" fill="#8f8f70" opacity="0.6"/><rect x="12.0" y="138" width="0.8" height="1.4" fill="#8a8a8a" opacity="0.6"/><rect x="12.0" y="142" width="6.4" height="1.4" fill="#3f6f96" opacity="0.6"/><rect x="19.6" y="142" width="3.4" height="1.4" fill="#3a8f80" opacity="0.6"/><rect x="24.2" y="142" width="10.4" height="1.4" fill="#8f8f70" opacity="0.6"/><rect x="35.8" y="142" width="5.4" height="1.4" fill="#3a8f80" opacity="0.6"/><rect x="42.4" y="142" width="2.4" height="1.4" fill="#6a93a8" opacity="0.6"/><rect x="46.0" y="142" width="2.4" height="1.4" fill="#8a8a8a" opacity="0.6"/><rect x="16.0" y="144" width="10.4" height="1.4" fill="#3a8f80" opacity="0.6"/><rect x="27.6" y="144" width="16.4" height="1.4" fill="#8f8f70" opacity="0.6"/><rect x="45.2" y="144" width="3.4" height="1.4" fill="#3f6f96" opacity="0.6"/><rect x="49.8" y="144" width="4.4" height="1.4" fill="#6a93a8" opacity="0.6"/><rect x="12.0" y="146" width="0.8" height="1.4" fill="#8a8a8a" opacity="0.6"/><rect x="12.0" y="150" width="6.4" height="1.4" fill="#3f6f96" opacity="0.6"/><rect x="19.6" y="150" width="3.4" height="1.4" fill="#3a8f80" opacity="0.6"/><rect x="24.2" y="150" width="9.4" height="1.4" fill="#8f8f70" opacity="0.6"/><rect x="34.8" y="150" width="2.4" height="1.4" fill="#8a8a8a" opacity="0.6"/><rect x="16.0" y="152" width="5.4" height="1.4" fill="#3a8f80" opacity="0.6"/><rect x="22.6" y="152" width="3.4" height="1.4" fill="#6a93a8" opacity="0.6"/><rect x="27.2" y="152" width="1.4" height="1.4" fill="#8a8a8a" opacity="0.6"/><rect x="29.8" y="152" width="10.4" height="1.4" fill="#3a8f80" opacity="0.6"/><rect x="41.4" y="152" width="14.4" height="1.4" fill="#8f8f70" opacity="0.6"/><rect x="57.0" y="152" width="13.4" height="1.4" fill="#8a6250" opacity="0.6"/><rect x="71.6" y="152" width="2.4" height="1.4" fill="#8a8a8a" opacity="0.6"/><rect x="16.0" y="154" width="1.4" height="1.4" fill="#8a5a86" opacity="0.6"/><rect x="18.6" y="154" width="0.8" height="1.4" fill="#8a8a8a" opacity="0.6"/><rect x="20.2" y="154" width="3.4" height="1.4" fill="#6a93a8" opacity="0.6"/><rect x="24.8" y="154" width="3.4" height="1.4" fill="#8a8a8a" opacity="0.6"/><rect x="29.4" y="154" width="3.4" height="1.4" fill="#3f6f96" opacity="0.6"/><rect x="34.0" y="154" width="3.4" height="1.4" fill="#8a8a8a" opacity="0.6"/><rect x="38.6" y="154" width="3.4" height="1.4" fill="#6a93a8" opacity="0.6"/><rect x="43.2" y="154" width="7.4" height="1.4" fill="#8f8f70" opacity="0.6"/><rect x="51.8" y="154" width="2.4" height="1.4" fill="#8a8a8a" opacity="0.6"/><rect x="20.0" y="156" width="6.4" height="1.4" fill="#3a8f80" opacity="0.6"/><rect x="27.6" y="156" width="2.4" height="1.4" fill="#6a93a8" opacity="0.6"/><rect x="31.2" y="156" width="1.4" height="1.4" fill="#8a8a8a" opacity="0.6"/><rect x="33.8" y="156" width="2.4" height="1.4" fill="#3f6f96" opacity="0.6"/><rect x="37.4" y="156" width="6.4" height="1.4" fill="#3a8f80" opacity="0.6"/><rect x="45.0" y="156" width="4.4" height="1.4" fill="#6a93a8" opacity="0.6"/><rect x="20.0" y="158" width="13.4" height="1.4" fill="#6a93a8" opacity="0.6"/><rect x="34.6" y="158" width="3.4" height="1.4" fill="#8f8f70" opacity="0.6"/><rect x="39.2" y="158" width="3.4" height="1.4" fill="#6a93a8" opacity="0.6"/><rect x="43.8" y="158" width="1.4" height="1.4" fill="#8a8a8a" opacity="0.6"/><rect x="16.0" y="160" width="1.4" height="1.4" fill="#8a8a8a" opacity="0.6"/><rect x="18.6" y="160" width="3.4" height="1.4" fill="#8a5a86" opacity="0.6"/><rect x="23.2" y="160" width="1.4" height="1.4" fill="#8a8a8a" opacity="0.6"/><rect x="20.0" y="162" width="10.4" height="1.4" fill="#3a8f80" opacity="0.6"/><rect x="31.6" y="162" width="16.4" height="1.4" fill="#8f8f70" opacity="0.6"/><rect x="49.2" y="162" width="3.4" height="1.4" fill="#3f6f96" opacity="0.6"/><rect x="53.8" y="162" width="1.4" height="1.4" fill="#8a8a8a" opacity="0.6"/><rect x="56.4" y="162" width="21.4" height="1.4" fill="#8a6250" opacity="0.6"/><rect x="16.0" y="164" width="0.8" height="1.4" fill="#8a8a8a" opacity="0.6"/><rect x="12.0" y="168" width="6.4" height="1.4" fill="#3f6f96" opacity="0.6"/><rect x="19.6" y="168" width="3.4" height="1.4" fill="#3a8f80" opacity="0.6"/><rect x="24.2" y="168" width="9.4" height="1.4" fill="#8f8f70" opacity="0.6"/><rect x="34.8" y="168" width="2.4" height="1.4" fill="#8a8a8a" opacity="0.6"/><rect x="16.0" y="170" width="5.4" height="1.4" fill="#3a8f80" opacity="0.6"/><rect x="22.6" y="170" width="3.4" height="1.4" fill="#6a93a8" opacity="0.6"/><rect x="27.2" y="170" width="1.4" height="1.4" fill="#8a8a8a" opacity="0.6"/><rect x="29.8" y="170" width="10.4" height="1.4" fill="#3a8f80" opacity="0.6"/><rect x="41.4" y="170" width="14.4" height="1.4" fill="#8f8f70" opacity="0.6"/><rect x="57.0" y="170" width="13.4" height="1.4" fill="#8a6250" opacity="0.6"/><rect x="71.6" y="170" width="2.4" height="1.4" fill="#8a8a8a" opacity="0.6"/><rect x="16.0" y="172" width="1.4" height="1.4" fill="#8a5a86" opacity="0.6"/><rect x="18.6" y="172" width="0.8" height="1.4" fill="#8a8a8a" opacity="0.6"/><rect x="20.2" y="172" width="3.4" height="1.4" fill="#6a93a8" opacity="0.6"/><rect x="24.8" y="172" width="3.4" height="1.4" fill="#8a8a8a" opacity="0.6"/><rect x="29.4" y="172" width="3.4" height="1.4" fill="#3f6f96" opacity="0.6"/><rect x="34.0" y="172" width="2.4" height="1.4" fill="#8a8a8a" opacity="0.6"/><rect x="20.0" y="174" width="2.4" height="1.4" fill="#3a8f80" opacity="0.6"/><rect x="23.6" y="174" width="2.4" height="1.4" fill="#6a93a8" opacity="0.6"/><rect x="27.2" y="174" width="1.4" height="1.4" fill="#8a8a8a" opacity="0.6"/><rect x="29.8" y="174" width="6.4" height="1.4" fill="#3a8f80" opacity="0.6"/><rect x="37.4" y="174" width="8.4" height="1.4" fill="#8f8f70" opacity="0.6"/><rect x="47.0" y="174" width="3.4" height="1.4" fill="#6a93a8" opacity="0.6"/><rect x="20.0" y="176" width="1.4" height="1.4" fill="#8a5a86" opacity="0.6"/><rect x="22.6" y="176" width="0.8" height="1.4" fill="#8a8a8a" opacity="0.6"/><rect x="24.2" y="176" width="2.4" height="1.4" fill="#6a93a8" opacity="0.6"/><rect x="27.8" y="176" width="3.4" height="1.4" fill="#8a8a8a" opacity="0.6"/><rect x="32.4" y="176" width="13.4" height="1.4" fill="#6a93a8" opacity="0.6"/><rect x="47.0" y="176" width="4.4" height="1.4" fill="#8f8f70" opacity="0.6"/><rect x="52.6" y="176" width="2.4" height="1.4" fill="#8a8a8a" opacity="0.6"/><rect x="24.0" y="178" width="13.4" height="1.4" fill="#6a93a8" opacity="0.6"/><rect x="38.6" y="178" width="6.4" height="1.4" fill="#8f8f70" opacity="0.6"/><rect x="46.2" y="178" width="2.4" height="1.4" fill="#6a93a8" opacity="0.6"/><rect x="24.0" y="180" width="10.4" height="1.4" fill="#3a8f80" opacity="0.6"/><rect x="35.6" y="180" width="16.4" height="1.4" fill="#8f8f70" opacity="0.6"/><rect x="53.2" y="180" width="3.4" height="1.4" fill="#3f6f96" opacity="0.6"/><rect x="57.8" y="180" width="1.4" height="1.4" fill="#8a8a8a" opacity="0.6"/><rect x="60.4" y="180" width="21.4" height="1.4" fill="#8a6250" opacity="0.6"/><rect x="20.0" y="182" width="1.4" height="1.4" fill="#8a8a8a" opacity="0.6"/><rect x="22.6" y="182" width="3.4" height="1.4" fill="#8a5a86" opacity="0.6"/><rect x="27.2" y="182" width="1.4" height="1.4" fill="#8a8a8a" opacity="0.6"/><rect x="24.0" y="184" width="10.4" height="1.4" fill="#3a8f80" opacity="0.6"/><rect x="35.6" y="184" width="16.4" height="1.4" fill="#8f8f70" opacity="0.6"/><rect x="53.2" y="184" width="3.4" height="1.4" fill="#3f6f96" opacity="0.6"/><rect x="57.8" y="184" width="1.4" height="1.4" fill="#8a8a8a" opacity="0.6"/><rect x="60.4" y="184" width="13.4" height="1.4" fill="#8a6250" opacity="0.6"/><rect x="20.0" y="186" width="0.8" height="1.4" fill="#8a8a8a" opacity="0.6"/><rect x="16.0" y="188" width="0.8" height="1.4" fill="#8a8a8a" opacity="0.6"/><rect x="16.0" y="190" width="3.4" height="1.4" fill="#3f6f96" opacity="0.6"/><rect x="20.6" y="190" width="8.4" height="1.4" fill="#8f8f70" opacity="0.6"/><rect x="12.0" y="192" width="0.8" height="1.4" fill="#8a8a8a" opacity="0.6"/><rect x="12.0" y="196" width="6.4" height="1.4" fill="#3f6f96" opacity="0.6"/><rect x="19.6" y="196" width="3.4" height="1.4" fill="#3a8f80" opacity="0.6"/><rect x="24.2" y="196" width="5.4" height="1.4" fill="#8f8f70" opacity="0.6"/><rect x="30.8" y="196" width="2.4" height="1.4" fill="#8a8a8a" opacity="0.6"/><rect x="16.0" y="198" width="2.4" height="1.4" fill="#3a8f80" opacity="0.6"/><rect x="19.6" y="198" width="2.4" height="1.4" fill="#6a93a8" opacity="0.6"/><rect x="23.2" y="198" width="1.4" height="1.4" fill="#8a8a8a" opacity="0.6"/><rect x="25.8" y="198" width="10.4" height="1.4" fill="#3a8f80" opacity="0.6"/><rect x="37.4" y="198" width="16.4" height="1.4" fill="#8f8f70" opacity="0.6"/><rect x="55.0" y="198" width="3.4" height="1.4" fill="#3f6f96" opacity="0.6"/><rect x="59.6" y="198" width="1.4" height="1.4" fill="#8a8a8a" opacity="0.6"/><rect x="62.2" y="198" width="33.4" height="1.4" fill="#8a6250" opacity="0.6"/><rect x="16.0" y="200" width="1.4" height="1.4" fill="#8a5a86" opacity="0.6"/><rect x="18.6" y="200" width="0.8" height="1.4" fill="#8a8a8a" opacity="0.6"/><rect x="20.2" y="200" width="2.4" height="1.4" fill="#6a93a8" opacity="0.6"/><rect x="23.8" y="200" width="4.4" height="1.4" fill="#8a8a8a" opacity="0.6"/><rect x="29.4" y="200" width="2.4" height="1.4" fill="#8a8a8a" opacity="0.6"/><rect x="20.0" y="202" width="5.4" height="1.4" fill="#3a8f80" opacity="0.6"/><rect x="26.6" y="202" width="4.4" height="1.4" fill="#8f8f70" opacity="0.6"/><rect x="16.0" y="204" width="1.4" height="1.4" fill="#8a8a8a" opacity="0.6"/><rect x="18.6" y="204" width="3.4" height="1.4" fill="#8a5a86" opacity="0.6"/><rect x="23.2" y="204" width="1.4" height="1.4" fill="#8a8a8a" opacity="0.6"/><rect x="20.0" y="206" width="3.4" height="1.4" fill="#3f6f96" opacity="0.6"/><rect x="24.6" y="206" width="8.4" height="1.4" fill="#8f8f70" opacity="0.6"/><rect x="16.0" y="208" width="0.8" height="1.4" fill="#8a8a8a" opacity="0.6"/><rect x="12.0" y="210" width="0.8" height="1.4" fill="#8a8a8a" opacity="0.6"/><rect x="12.0" y="214" width="6.4" height="1.4" fill="#3f6f96" opacity="0.6"/><rect x="19.6" y="214" width="5.4" height="1.4" fill="#3a8f80" opacity="0.6"/><rect x="26.2" y="214" width="11.4" height="1.4" fill="#8f8f70" opacity="0.6"/><rect x="38.8" y="214" width="5.4" height="1.4" fill="#3a8f80" opacity="0.6"/><rect x="45.4" y="214" width="2.4" height="1.4" fill="#6a93a8" opacity="0.6"/><rect x="49.0" y="214" width="2.4" height="1.4" fill="#8a8a8a" opacity="0.6"/><rect x="16.0" y="216" width="5.4" height="1.4" fill="#8a5a86" opacity="0.6"/><rect x="22.6" y="216" width="10.4" height="1.4" fill="#3a8f80" opacity="0.6"/><rect x="34.2" y="216" width="14.4" height="1.4" fill="#8f8f70" opacity="0.6"/><rect x="49.8" y="216" width="3.4" height="1.4" fill="#3f6f96" opacity="0.6"/><rect x="54.4" y="216" width="4.4" height="1.4" fill="#6a93a8" opacity="0.6"/><rect x="12.0" y="218" width="0.8" height="1.4" fill="#8a8a8a" opacity="0.6"/><rect x="8.0" y="220" width="0.8" height="1.4" fill="#8a8a8a" opacity="0.6"/></svg>
<div class="a" style="left:1349px;top:104px;width:16px;height:407px;background:#1e1e1e;border-left:1px solid #4a4a4a;border-top:1px solid #4a4a4a"></div>
<div class="a" style="left:1350px;top:286px;width:15px;height:55px;background:#4e4e4e"></div>
<div class="a" style="left:1350px;top:299px;width:15px;height:2px;background:#7a7a7a"></div>
<div class="a" style="left:1360px;top:130px;width:5px;height:6px;background:#cca700"></div>
<div class="a" style="left:1360px;top:389px;width:5px;height:6px;background:#cca700"></div>
<div class="a" style="left:364px;top:511px;width:1001px;height:191px;background:#1e1e1e;border-top:1px solid #3a3a3a"></div>
<span class="t" style="left:388px;top:524.6px;font-size:13.3px;line-height:19px;color:#8f8f8f;transform:scaleX(0.8591);">PROBLEMS</span>
<div class="a" style="left:462px;top:523.5px;width:21px;height:21px;border-radius:11px;background:#4d4d4d"></div>
<span class="t" style="left:468.8px;top:525.8px;font-size:12.8px;line-height:18px;color:#ffffff;">2</span>
<span class="t" style="left:507.3px;top:524.6px;font-size:13.3px;line-height:19px;color:#e7e7e7;transform:scaleX(0.9100);">TERMINAL</span>
<div class="a" style="left:507px;top:549px;width:62px;height:1px;background:#e7e7e7"></div>
<span class="t" style="left:593px;top:524.6px;font-size:13.3px;line-height:19px;color:#8f8f8f;transform:scaleX(0.8527);">REFACTOR PREVIEW</span>
<div class="a" style="left:948px;top:519px;width:204px;height:28px;background:#3c3c3c"></div>
<span class="t" style="left:959.3px;top:523px;font-size:15.8px;line-height:22px;color:#f0f0f0;transform:scaleX(0.9367);">4: Java Process Console</span>
<svg style="left:1131.3px;top:529.3px" width="12" height="8" viewBox="0 0 12 8" fill="none" stroke="#c5c5c5" stroke-width="1.4"><path d="M0.8 1 L6 6.2 L11.2 1"/></svg>
<svg style="left:1172.2px;top:523.6px" width="17" height="17" viewBox="0 0 17 17" fill="none" stroke="#c5c5c5" stroke-width="1.8"><path d="M8.5 0.5 V16.5 M0.5 8.5 H16.5"/></svg>
<svg style="left:1212px;top:524px" width="16.4" height="16" viewBox="0 0 16 15" fill="none" stroke="#c5c5c5" stroke-width="1.6"><rect x="0.7" y="0.7" width="14.6" height="13.6" rx="1.2"/><path d="M8 1 V14"/></svg>
<svg style="left:1250px;top:522.8px" width="15" height="17" viewBox="0 0 15 17" fill="none" stroke="#c5c5c5" stroke-width="1.5" stroke-linejoin="round"><path d="M0.8 3.8 H14.2 M5 3.5 V1.2 H10 V3.5 M2.3 4 V14.8 Q2.3 16 3.5 16 H11.5 Q12.7 16 12.7 14.8 V4 M5.5 6.5 V13.5 M7.5 6.5 V13.5 M9.5 6.5 V13.5"/><rect x="3" y="4.5" width="9" height="11" fill="#c5c5c5" opacity="0.55" stroke="none"/></svg>
<svg style="left:1289.6px;top:527.6px" width="13" height="8.4" viewBox="0 0 14 9" fill="none" stroke="#c5c5c5" stroke-width="1.8"><path d="M0.8 8 L7 1.6 L13.2 8"/></svg>
<svg style="left:1328.4px;top:526.6px" width="11.6" height="11.6" viewBox="0 0 12 12" fill="none" stroke="#c5c5c5" stroke-width="1.7"><path d="M0.8 0.8 L11.2 11.2 M11.2 0.8 L0.8 11.2"/></svg>
<div class="term" style="top:580.5px"><span class="tw">PS D:\DEV\JAVA\PROJECTS\BIREYSEL\2. Ders&gt;  </span><span class="tyl">d:; cd</span><span class="tw"> </span>&#x27;d:\DEV\JAVA\PROJECTS\BIREYSEL\2. Ders&#x27;<span class="tw">; &amp; </span>&#x27;c:\Users\Adm</div>
<div class="term" style="top:600.5px">inistrator\.vscode\extensions\vscjava.vscode-java-debug-0.30.0\scripts\launcher.bat&#x27; &#x27;C:\Program Files\Ado</div>
<div class="term" style="top:620.5px">ptOpenJDK\jdk-11.0.9.101-hotspot\bin\java.exe&#x27; &#x27;-Dfile.encoding=UTF-8&#x27; &#x27;-cp&#x27; &#x27;C:\Users\Administrator\AppDa</div>
<div class="term" style="top:640.5px">ta\Roaming\Code\User\workspaceStorage\0d66d492b85715b6c56251821588cab0\redhat.java\jdt_ws\2. Ders_73e619cd</div>
<div class="term" style="top:660.5px">\bin&#x27; &#x27;KayitListesi&#x27;</div>
<div class="a" style="left:388px;top:680px;width:9px;height:20px;border:1px solid #c8c8c8"></div>
<div class="a" style="left:538px;top:242px;width:291px;height:238px;background:#eeeeee;box-shadow:0 0 0 1px #00000040"></div>
<div class="a" style="left:538px;top:242px;width:291px;height:30px;background:#ffffff"></div>
<span class="t" style="left:546px;top:248px;font-size:12.5px;line-height:18px;color:#000000;transform:scaleX(0.9712);">Input</span>
<svg style="left:808.6px;top:250.7px" width="10.6" height="10.6" viewBox="0 0 12 12" fill="none" stroke="#111" stroke-width="1.25"><path d="M0.7 0.7 L11.3 11.3 M11.3 0.7 L0.7 11.3"/></svg>
<div class="a" style="left:549px;top:282px;width:27px;height:27px;background:linear-gradient(135deg,#b5d9ad,#8fc485);border:1px solid #5e8a58;box-shadow:2px 2px 3px #00000055"></div>
<span class="t" style="left:556px;top:280px;font-size:22px;line-height:31px;color:#0a3a0a;font-weight:700;text-shadow:0 0 1.5px #dff5d8;">?</span>
<span class="t" style="left:595px;top:282.8px;font-size:12px;line-height:17px;color:#333333;transform:scaleX(0.9854);font-weight:700;">Lütfen Seçim Yapınız:</span>
<span class="t" style="left:595px;top:301.5px;font-size:12px;line-height:17px;color:#4a4a4a;transform:scaleX(1.0261);font-weight:700;">************************</span>
<span class="t" style="left:595px;top:338px;font-size:12px;line-height:17px;color:#333333;transform:scaleX(0.9850);font-weight:700;">[1] Öğrenci Ekle</span>
<span class="t" style="left:595px;top:357px;font-size:12px;line-height:17px;color:#333333;transform:scaleX(0.9834);font-weight:700;">[2] Öğrenci Sil</span>
<span class="t" style="left:595px;top:376px;font-size:12px;line-height:17px;color:#333333;transform:scaleX(0.9933);font-weight:700;">[3] Öğrenci Listesi</span>
<span class="t" style="left:595px;top:395px;font-size:12px;line-height:17px;color:#333333;transform:scaleX(0.9715);font-weight:700;">[0 veya Cancel] Çıkış</span>
<div class="a" style="left:595px;top:413px;width:223px;height:19px;background:#fff;border:1px solid #7a8a99"></div>
<span class="t" style="left:598px;top:415.2px;font-size:12px;line-height:17px;color:#333;">1</span>
<div class="a" style="left:604px;top:416px;width:1px;height:14px;background:#000"></div>
<div class="a" style="left:619px;top:442px;width:61px;height:26px;background:linear-gradient(#e6eef7 0%,#ffffff 42%,#dde8f3 58%,#c0d3e7 100%);border:1px solid #7a8a99;box-shadow:inset 0 0 0 1px #8093a8"></div>
<div class="a" style="left:686px;top:442px;width:61px;height:26px;background:linear-gradient(#e6eef7 0%,#ffffff 42%,#dde8f3 58%,#c0d3e7 100%);border:1px solid #7a8a99"></div>
<span class="t" style="left:641px;top:448px;font-size:12px;line-height:17px;color:#333333;transform:scaleX(0.8889);font-weight:700;">OK</span>
<span class="t" style="left:696px;top:448px;font-size:12px;line-height:17px;color:#333333;transform:scaleX(1.0165);font-weight:700;">Cancel</span>
<div class="a" style="left:0;top:728px;width:1365px;height:39px;background:#1b1b1b"></div>
<div class="a" style="left:588px;top:728px;width:48px;height:39px;background:#464646"></div>
<div class="a" style="left:588px;top:765.5px;width:48px;height:1.5px;background:#76b9ed"></div>
<div class="a" style="left:935px;top:765.5px;width:40px;height:1.5px;background:#76b9ed"></div>
<div class="a" style="left:984px;top:765.5px;width:40px;height:1.5px;background:#76b9ed"></div>
<svg style="left:16px;top:740px" width="17" height="16" viewBox="0 0 17 16" fill="#fff"><path d="M0 2.2 L7 1.2 V7.6 H0 Z M8 1.1 L17 0 V7.6 H8 Z M0 8.5 H7 V14.8 L0 13.8 Z M8 8.5 H17 V16 L8 14.9 Z"/></svg>
<svg style="left:62.4px;top:739px" width="19" height="18" viewBox="0 0 19 18" fill="none" stroke="#fff" stroke-width="1.5"><circle cx="12" cy="6.7" r="5.5"/><path d="M8.2 10.8 L1.5 17"/></svg>
<svg style="left:111px;top:739px" width="18" height="17" viewBox="0 0 18 17" fill="none" stroke="#fff" stroke-width="1.3"><rect x="1.4" y="6" width="10.6" height="5.6"/><path d="M1.4 1.2 V3.6 H12 V1.2 M1.4 16 V13.6 H12 V16 M15.4 1 V16"/><rect x="14" y="5.4" width="3" height="3" fill="#fff" stroke="none"/></svg>
<svg style="left:159px;top:736px" width="25" height="23" viewBox="0 0 25 23"><path d="M7.5 1.4 L23 6.7 V16.5 L7.5 12 Z" fill="#43b4fb"/><path d="M7.5 1.4 L23 6.7 V16.5" fill="none" stroke="#a9dcff" stroke-width="0.9"/><path d="M0.8 18 L6.4 15.8 L17.7 20.4 L12 22.3 Z" fill="#d9d9d9"/><path d="M12 15.6 L15.5 14.4 L20 16.4 L16.5 17.8 Z" fill="#c4c4c4"/></svg>
<div class="a" style="left:208px;top:737px;width:24px;height:22px;background:#a80a0a;outline:1px dashed #7a0508"></div>
<span class="t" style="left:211px;top:734.5px;font-size:19px;line-height:27px;color:#fff;font-weight:700;font-style:italic;letter-spacing:-1.5px;">Fz</span>
<svg style="left:257px;top:737px" width="23" height="23" viewBox="-11.5 -11.5 23 23"><circle r="11" fill="#db4437"/><path d="M0 0 L-9.53 -5.5 A11 11 0 0 0 0 11 Z" fill="#0f9d58"/><path d="M0 0 L0 11 A11 11 0 0 0 9.53 -5.5 Z" fill="#ffcd40"/><path d="M0 0 L-9.53 -5.5 L-4.6 3 L0 11 Z" fill="#0f9d58"/><path d="M0 -5 H10 A11 11 0 0 1 0 11 L4.5 2.6 Z" fill="#ffcd40"/><path d="M-9.53 -5.5 A11 11 0 0 1 9.9 -4.8 H0 Z" fill="#db4437"/><circle r="5" fill="#fff"/><circle r="4" fill="#4285f4"/></svg>
<svg style="left:306px;top:736px" width="24" height="23" viewBox="0 0 24 23" fill="none" stroke="#ff1fa5" stroke-linejoin="round"><path d="M9 2 H15 Q22 2 22 8.5 M22 14.5 Q22 21 15 21 H9 Q2 21 2 14.5 M2 8.5 Q2 2 9 2" stroke-width="3"/><path d="M6.5 7 V13 Q6.5 16 9.2 16 Q12 16 12 13 V8 M12 13 Q12 16 14.8 16 Q17.5 16 17.5 13 V7" stroke-width="2.4"/><path d="M1.2 10 V13 M22.8 10 V13" stroke-width="1.6"/></svg>
<svg style="left:354px;top:736px" width="34" height="28" viewBox="0 0 34 28"><path d="M1 9.5 L13 1 L25 9.5 Z" fill="#0f64b8"/><path d="M4.5 7.5 H21.5 V16 H4.5 Z" fill="#f4f8fc"/><path d="M1 9.5 L13 16.5 L25 9.5 V22.5 H1 Z" fill="#22a0ea"/><path d="M1 22.5 L13 16.5 L25 22.5 Z" fill="#3db4f5"/><circle cx="25.5" cy="19" r="7.3" fill="#1f2a33" stroke="#e8e8e8" stroke-width="1.1"/></svg>
<span class="t" style="left:376.5px;top:747px;font-size:11.5px;line-height:16px;color:#fff;font-weight:700;">7</span>
<svg style="left:404px;top:736px" width="24" height="24" viewBox="0 0 24 24"><path d="M7 2 L21 4 L17 18 L1 15 Z" fill="#e0343a"/><path d="M7 2 L21 4 L20 7 L6 5 Z" fill="#bdbdbd"/><path d="M17 18 L21 4 L23 12 L19 21 Z" fill="#d8d8d8"/><path d="M8 16.5 h3 v-3 h2.6 v3 h3 v2.6 h-3 v3 h-2.6 v-3 h-3 z" fill="#2ec02e"/><path d="M16 18 h2.2 v-2.2 h2 v2.2 h2.2 v2 h-2.2 v2.2 h-2 v-2.2 h-2.2 z" fill="#f2d21c"/></svg>
<svg style="left:452px;top:736px" width="26" height="24" viewBox="0 0 26 24"><g fill="#c9a91e" stroke="#8a7410" stroke-width="0.6"><rect x="1" y="2" width="13" height="15" rx="2"/><rect x="12" y="7" width="13" height="9" rx="2"/><rect x="8" y="12" width="13" height="11" rx="2"/></g><g fill="#e8d25a"><ellipse cx="7.5" cy="3.5" rx="6" ry="2"/><ellipse cx="18.5" cy="8.5" rx="6" ry="2"/><ellipse cx="14.5" cy="13.5" rx="6" ry="2"/></g><g stroke="#8a7410" stroke-width="0.7"><path d="M1.5 7 H13.5 M1.5 10 H9 M12.5 12 H24.5 M8.5 17 H20.5 M8.5 20 H20.5"/></g></svg>
<div class="a" style="left:503px;top:736px;width:22px;height:22px;background:#001d33;border:1.5px solid #2fc3f3"></div>
<span class="t" style="left:506.8px;top:737.3px;font-size:14.5px;line-height:20px;color:#2fc3f3;letter-spacing:0px;">Ps</span>
<svg style="left:550px;top:735px" width="26" height="26" viewBox="-13 -13 26 26"><circle r="11.3" fill="#10200c" stroke="#6cc024" stroke-width="2"/><g transform="scale(-1,1)"><path d="M-6 7 L-3 -1 L4 -7 L7.5 -3.5 L1.5 3.5 Z" fill="#f2f2f2"/><path d="M-6 7 L-4.2 2.2 L-1.3 5.2 Z" fill="#222"/><path d="M2 -5.5 L6 -1.5" stroke="#555" stroke-width="1"/></g></svg>
<svg style="left:600px;top:735px" width="25" height="25" viewBox="0 0 100 100"><path d="M74 2 L96 12 V88 L74 98 L30 58 L12 72 L3 67 V33 L12 28 L30 42 Z M74 32 L48 50 L74 68 Z M10 43 V57 L18 50 Z" fill="#1a8ad8" fill-rule="evenodd"/><path d="M74 2 L96 12 V88 L74 98 Z" fill="#31aaf4"/></svg>
<div class="a" style="left:649px;top:736px;width:24px;height:23px;background:linear-gradient(135deg,#f58a42,#e0541c)"></div>
<svg style="left:649px;top:736px" width="24" height="23" viewBox="0 0 24 23" fill="none" stroke="#ffd9c2" stroke-width="1.5"><path d="M3 8 V3.5 H8 M16 3.5 H21 V8 M21 15 V19.5 H16 M8 19.5 H3 V15"/><circle cx="12" cy="11.5" r="4" fill="#f6f1e0" stroke="none"/></svg>
<svg style="left:699px;top:736px" width="23" height="23" viewBox="0 0 23 23"><rect width="23" height="23" rx="7" fill="#4a8cff"/><rect x="4.5" y="7.5" width="9.5" height="8" rx="2" fill="#fff"/><path d="M14.8 10.5 L18.5 8 V15 L14.8 12.5 Z" fill="#fff"/></svg>
<svg style="left:747px;top:736px" width="25" height="24" viewBox="0 0 25 24" fill="none" stroke-width="3.8"><rect x="2" y="9" width="14" height="13" rx="1.5" stroke="#f38b00"/><rect x="9" y="2" width="14" height="13" rx="1.5" stroke="#1d9ad6"/><path d="M9 12 V9 H12" stroke="#f38b00"/></svg>
<svg style="left:796px;top:736px" width="24" height="23" viewBox="0 0 24 23"><rect width="24" height="23" fill="#0e8ee9"/><circle cx="12" cy="11.5" r="9.3" fill="#fff"/><path d="M3.8 11.5 L9 8 V10.3 H15 V8 L20.2 11.5 L15 15 V12.7 H9 V15 Z" fill="#0e6fd0"/></svg>
<svg style="left:845px;top:736px" width="25" height="24" viewBox="0 0 25 24"><circle cx="21" cy="7" r="2.8" fill="#7b83eb"/><circle cx="14.5" cy="5" r="4" fill="#5b5fc7"/><path d="M17 9.5 H24 Q25 9.5 25 10.5 V16 Q25 19.5 21.5 19.5 Q18 19.5 17 17 Z" fill="#5b5fc7"/><path d="M8 9.5 H19 Q20 9.5 20 10.5 V17 Q20 23 14 23 Q8 23 8 17 Z" fill="#7b83eb"/><rect x="0" y="6" width="12" height="12" rx="1.2" fill="#4b53bc"/><path d="M3 9 H9 V10.8 H7 V15.5 H5 V10.8 H3 Z" fill="#fff"/></svg>
<div class="a" style="left:894px;top:736px;width:24px;height:23px;background:#8a0f8f;border:1px solid #5e0863;border-radius:1px"></div>
<svg style="left:894px;top:736px" width="24" height="23" viewBox="0 0 24 23"><path d="M7 3 H15 L19 7 V20 H7 Z" fill="#f4eaf5"/><path d="M15 3 V7 H19 Z" fill="#c9a6cc"/><path d="M6 7 L9 5 L15 14 L15.5 17.5 L12 16 Z" fill="#6a0a70" stroke="#f4eaf5" stroke-width="0.7"/></svg>
<svg style="left:943px;top:738px" width="23" height="20" viewBox="0 0 23 20"><path d="M1 1.5 H8 L10 3.5 H22 V17 H1 Z" fill="#e8b33a"/><path d="M1 5.5 H22 V17.5 H1 Z" fill="#fad667"/><path d="M5 12.5 H18 V19.5 H5 Z" fill="#2f8be0"/><path d="M8.5 15.5 H14.5 V19.5 H8.5 Z" fill="#fad667"/></svg>
<svg style="left:992px;top:736px" width="24" height="24" viewBox="0 0 24 24"><path d="M0 0 H18.5 L24 5.5 V24 H0 Z" fill="#f68b1f"/><path d="M18.5 0 V5.5 H24 Z" fill="#ffd3a1"/><g transform="translate(2.2,2.6) scale(0.82)"><path d="M6.5 10 Q6.5 4.5 12 4.5 Q15.5 4.5 17 7 L14.5 8 Q13.5 6.8 12 6.8 Q9 6.8 9 10 Q9 13 12 13 Q14.5 13 15 11 H12 V9.2 H17.5 Q18 15.3 12 15.3 Q6.5 15.3 6.5 10 Z" fill="#fff"/></g></svg>
<span class="t" style="left:999px;top:752px;font-size:5.8px;line-height:8px;color:#ffe6cc;font-weight:700;">PDF</span>
<svg style="left:1133px;top:745px" width="13" height="8" viewBox="0 0 13 8" fill="none" stroke="#fff" stroke-width="1.3"><path d="M0.7 7 L6.5 1.2 L12.3 7"/></svg>
<svg style="left:1155px;top:742px" width="17" height="11" viewBox="0 0 17 11"><path d="M4 10.5 Q0.5 10.5 0.5 7.5 Q0.5 5 3 4.6 Q4 1 7.5 1 Q10.5 1 11.6 3.8 Q16.5 3.6 16.5 7.4 Q16.5 10.5 13 10.5 Z" fill="#dcdcdc"/><path d="M3 4.6 Q4 1 7.5 1 Q10.5 1 11.6 3.8 Q9.5 4 8.5 6 L4.5 4.8 Z" fill="#b5b5b5"/></svg>
<svg style="left:1181px;top:742px" width="14" height="14" viewBox="0 0 14 14" fill="none" stroke="#fff" stroke-width="1.2"><path d="M1 13 A12 12 0 0 1 13 1" opacity="0.95"/><path d="M4.5 13 A8.5 8.5 0 0 1 13 4.5"/><path d="M8 13 A5 5 0 0 1 13 8"/><circle cx="12" cy="12" r="1.3" fill="#fff" stroke="none"/></svg>
<svg style="left:1202px;top:741px" width="18" height="15" viewBox="0 0 18 15" fill="none" stroke="#fff" stroke-width="1.1" stroke-linejoin="round"><path d="M1 5 H3.5 L7.5 1.5 V13.5 L3.5 10 H1 Z"/><path d="M10 5.2 Q11.4 7.5 10 9.8 M12.2 3.4 Q14.8 7.5 12.2 11.6"/><path d="M14.6 1.6 Q18 7.5 14.6 13.4" opacity="0.5"/></svg>
<svg style="left:1226px;top:741px" width="18" height="13" viewBox="0 0 18 13" fill="none" stroke="#fff" stroke-width="1.1"><rect x="5.5" y="3.5" width="11" height="7.5"/><path d="M16.5 6 h1.2 v2.6 h-1.2" /><rect x="7" y="5" width="8" height="4.5" fill="#fff" stroke="none"/><path d="M0.8 3.5 H4 V7 Q4 8.5 2.4 8.5 Q0.8 8.5 0.8 7 Z M1.6 3.5 V1 M3.2 3.5 V1 M2.4 8.5 V11.5 H5.5" stroke-width="1"/></svg>
<span class="t" style="left:1266.5px;top:731.5px;font-size:12px;line-height:17px;color:#fff;transform:scaleX(0.8825);">15:04</span>
<span class="t" style="left:1254px;top:748.9px;font-size:12px;line-height:17px;color:#fff;transform:scaleX(0.8575);">10.01.2021</span>
<svg style="left:1325px;top:740px" width="26" height="25" viewBox="0 0 26 25"><path d="M0.5 0.5 H16.5 V12.5 H4.5 L0.5 16 Z" fill="#fff"/><path d="M3 3.7 H14 M3 6.5 H14 M3 9.3 H14" stroke="#181818" stroke-width="1"/><circle cx="15.5" cy="15.5" r="8.3" fill="#181818" stroke="#dcdcdc" stroke-width="1"/></svg>
<span class="t" style="left:1334.3px;top:748px;font-size:11px;line-height:15px;color:#fff;letter-spacing:-0.4px;">13</span>
<div class="a" style="left:1360px;top:728px;width:1px;height:39px;background:#555"></div>
</body></html>
